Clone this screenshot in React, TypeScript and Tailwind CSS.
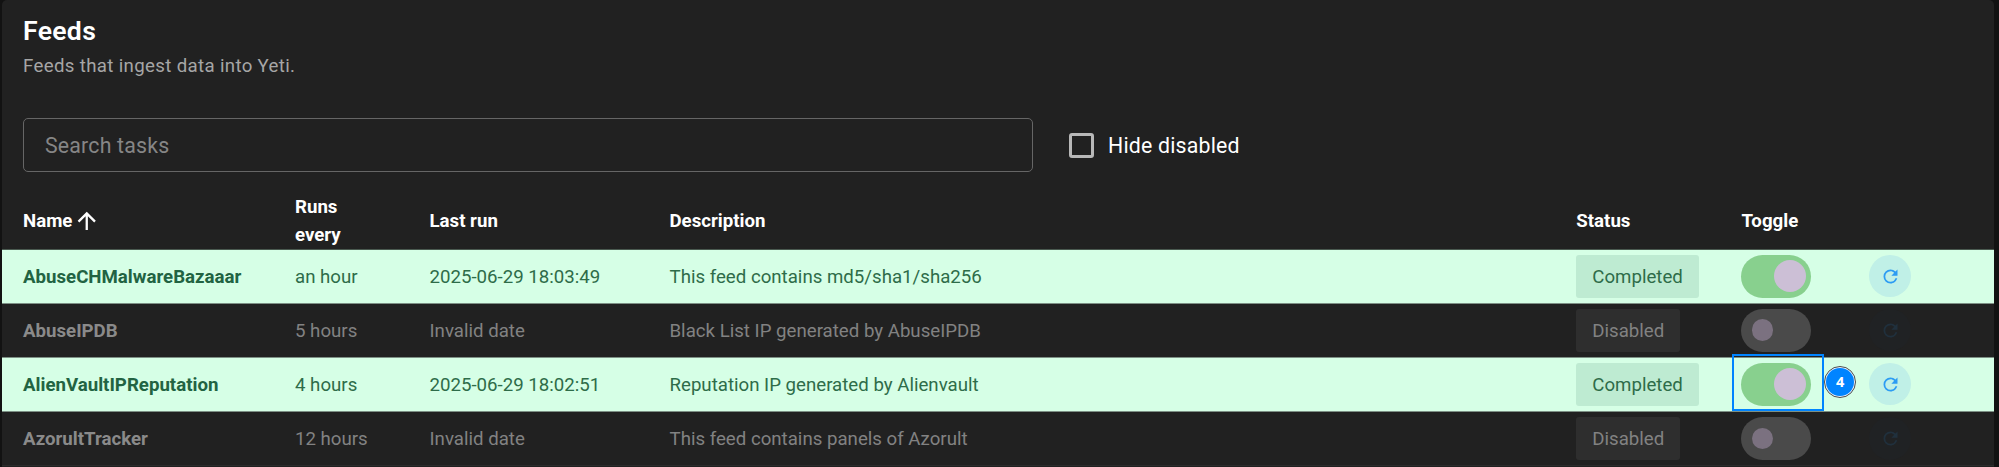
type Feed = {
  name: string;
  every: string;
  lastRun: string;
  description: string;
  enabled: boolean;
  marker?: string;
};

const feeds: Feed[] = [
  { name: "AbuseCHMalwareBazaaar", every: "an hour", lastRun: "2025-06-29 18:03:49", description: "This feed contains md5/sha1/sha256", enabled: true },
  { name: "AbuseIPDB", every: "5 hours", lastRun: "Invalid date", description: "Black List IP generated by AbuseIPDB", enabled: false },
  { name: "AlienVaultIPReputation", every: "4 hours", lastRun: "2025-06-29 18:02:51", description: "Reputation IP generated by Alienvault", enabled: true, marker: "4" },
  { name: "AzorultTracker", every: "12 hours", lastRun: "Invalid date", description: "This feed contains panels of Azorult", enabled: false },
];

const columns = "grid grid-cols-[272px_134.5px_240px_906.8px_165.1px_127.4px_1fr] items-center pl-[21px]";

function Toggle({ on }: { on: boolean }) {
  return on ? (
    <span className="flex h-[43px] w-[70px] items-center justify-end rounded-full bg-[#88d08e] pr-[5.5px]">
      <span className="size-[32px] rounded-full bg-[#ccbfd6]" />
    </span>
  ) : (
    <span className="flex h-[43px] w-[70px] items-center rounded-full bg-[#4a4a4a] pl-[10.5px]">
      <span className="size-[21.5px] rounded-full bg-[#7b7180]" />
    </span>
  );
}

function RefreshButton({ on }: { on: boolean }) {
  return (
    <button
      className={`flex size-[42.5px] items-center justify-center rounded-full ${on ? "bg-[#c0f0e7] text-[#2c9cf3]" : "bg-[#202224] text-[#20303d]"}`}
    >
      <svg viewBox="0 0 24 24" className="size-[21px]" fill="currentColor">
        <path d="M17.65 6.35C16.2 4.9 14.21 4 12 4a8 8 0 0 0-8 8 8 8 0 0 0 8 8c3.73 0 6.84-2.55 7.73-6h-2.08A5.99 5.99 0 0 1 12 18a6 6 0 0 1-6-6 6 6 0 0 1 6-6c1.66 0 3.14.69 4.22 1.78L13 11h7V4z" />
      </svg>
    </button>
  );
}

function FeedRow({ feed }: { feed: Feed }) {
  const on = feed.enabled;
  return (
    <div className={`${columns} h-[54.1px] border-b border-[#7d9085] pb-px last:border-[#2b2b2b] ${on ? "bg-[#d6ffe6] text-[#2e6c49]" : "bg-[#212121] text-[#828282]"}`}>
      <span className={`pt-px font-bold ${on ? "text-[#226342]" : "text-[#8a8a8a]"}`}>{feed.name}</span>
      <span className="pt-px">{feed.every}</span>
      <span className="pt-px">{feed.lastRun}</span>
      <span className="pt-px">{feed.description}</span>
      <span className={`flex h-[43px] items-center justify-self-start rounded-[3px] px-[16px] pt-px ${on ? "bg-[#beebd2]" : "bg-[#2e2e2e]"}`}>
        {on ? "Completed" : "Disabled"}
      </span>
      <span className="relative flex">
        <Toggle on={on} />
        {feed.marker && (
          <>
            <span className="absolute -top-[9px] -left-[9.5px] h-[57px] w-[92px] border-2 border-[#0084ff]" />
            <span className="absolute top-[3px] left-[82.700px] flex size-[32px] items-center justify-center rounded-full border border-[#4c4c4c] bg-[#e8f2ff] p-px">
              <span className="flex size-full items-center justify-center rounded-full bg-[#0084ff] font-['Open_Sans',sans-serif] text-[14.5px] font-bold text-white">
                {feed.marker}
              </span>
            </span>
          </>
        )}
      </span>
      <RefreshButton on={on} />
    </div>
  );
}

export default function App() {
  return (
    <div className="h-[467px] overflow-hidden bg-[#121212] pr-[5px] pl-[2px] font-[Roboto,sans-serif] text-[18.67px] text-white">
      <main className="h-[480px] rounded-t-[5px] bg-[#212121]">
        <header className="pt-[10px] pl-[21px]">
          <h1 className="h-[42px] text-[26.6px] leading-[42px] font-semibold tracking-[0.3px]">Feeds</h1>
          <p className="h-[27px] text-[18.67px] leading-[29px] tracking-[0.34px] text-[#a6a6a6]">Feeds that ingest data into Yeti.</p>
        </header>
        <div className="mt-[39px] flex h-[54px] items-center pl-[21px]">
          <input
            placeholder="Search tasks"
            className="h-[54px] w-[1010px] rounded-[5px] border border-[#666] bg-transparent px-[21px] text-[21.3px] tracking-[0.2px] outline-none placeholder:text-[#868686]"
          />
          <label className="ml-[36px] flex items-center gap-[14px] pt-px text-[21.3px] tracking-[0.2px]">
            <span className="size-[25px] rounded-[3px] border-[3px] border-[#b8b8b8]" />
            Hide disabled
          </label>
        </div>
        <div className={`${columns} h-[78px] border-b border-[#4a5a50] pt-[20px] font-bold`}>
          <span className="flex items-center gap-px pt-px">
            Name
            <svg viewBox="0 0 24 24" className="size-[27.500px]" fill="currentColor">
              <path d="M13 20h-2V8l-5.500 5.500-1.420-1.420L12 4.160l7.920 7.920-1.420 1.420L13 8z" />
            </svg>
          </span>
          <span className="w-[60px] leading-[28px]">Runs every</span>
          <span className="pt-px">Last run</span>
          <span className="pt-px">Description</span>
          <span className="pt-px">Status</span>
          <span className="pt-px">Toggle</span>
        </div>
        {feeds.map((feed) => (
          <FeedRow key={feed.name} feed={feed} />
        ))}
      </main>
    </div>
  );
}
